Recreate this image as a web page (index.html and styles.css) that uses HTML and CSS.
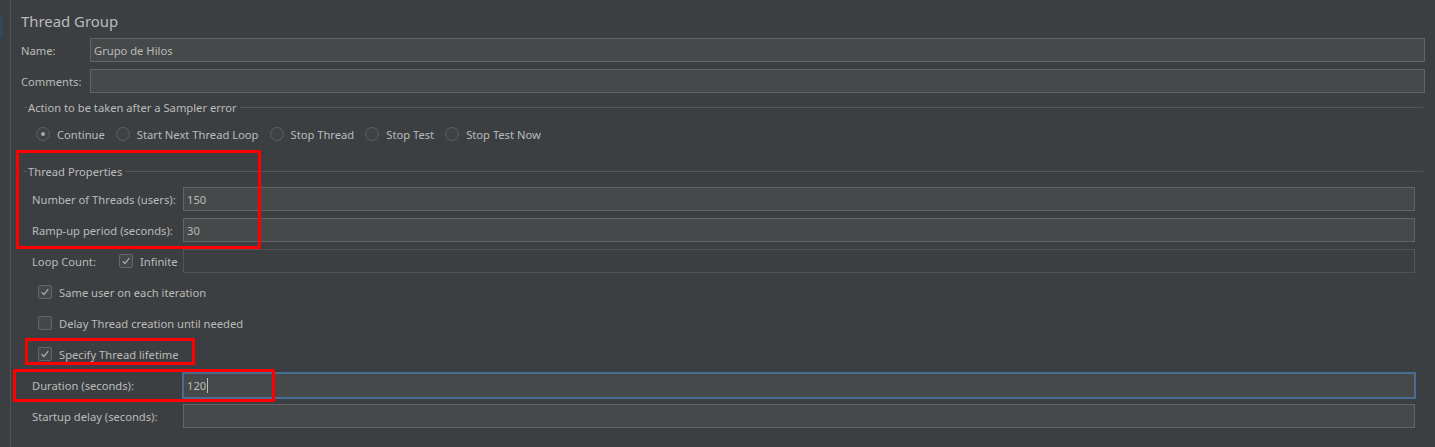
FILE: index.html
```html
<!DOCTYPE html>
<html>
<head>
<meta charset="utf-8">
<link rel="stylesheet" href="styles.css">
</head>
<body>
<div class="app">
  <div class="sidebar"><div class="sel"></div></div>
  <div class="main">
    <div class="title">Thread Group</div>
    <div class="row top-row first">
      <span class="lbl name-lbl">Name:</span>
      <div class="field">Grupo de Hilos</div>
    </div>
    <div class="row top-row">
      <span class="lbl name-lbl">Comments:</span>
      <div class="field"></div>
    </div>

    <div class="legend l1"><span class="pre"></span><span class="ltext">Action to be taken after a Sampler error</span><span class="line"></span></div>
    <div class="radios">
      <label class="opt"><span class="radio on"></span>Continue</label>
      <label class="opt"><span class="radio"></span>Start Next Thread Loop</label>
      <label class="opt"><span class="radio"></span>Stop Thread</label>
      <label class="opt"><span class="radio"></span>Stop Test</label>
      <label class="opt"><span class="radio"></span>Stop Test Now</label>
    </div>

    <div class="legend l2"><span class="pre"></span><span class="ltext">Thread Properties</span><span class="line"></span></div>
    <div class="props">
      <div class="row prow first">
        <span class="lbl plbl">Number of Threads (users):</span>
        <div class="field">150</div>
      </div>
      <div class="row prow">
        <span class="lbl plbl">Ramp-up period (seconds):</span>
        <div class="field">30</div>
      </div>
      <div class="row prow">
        <span class="lbl loop-lbl">Loop Count:</span>
        <span class="loop-check"><span class="cb on"><svg viewBox="0 0 14 14"><path d="M3.2 7.4 L5.8 10 L10.8 3.6" /></svg></span>Infinite</span>
        <div class="field disabled"></div>
      </div>
      <div class="crow"><span class="cb on"><svg viewBox="0 0 14 14"><path d="M3.2 7.4 L5.8 10 L10.8 3.6" /></svg></span>Same user on each iteration</div>
      <div class="crow"><span class="cb"></span>Delay Thread creation until needed</div>
      <div class="crow"><span class="cb on"><svg viewBox="0 0 14 14"><path d="M3.2 7.4 L5.8 10 L10.8 3.6" /></svg></span>Specify Thread lifetime</div>
      <div class="row prow">
        <span class="lbl plbl">Duration (seconds):</span>
        <div class="field focus">120<span class="caret"></span></div>
      </div>
      <div class="row prow">
        <span class="lbl plbl">Startup delay (seconds):</span>
        <div class="field"></div>
      </div>
    </div>
  </div>
</div>
<div class="hl hl1"></div>
<div class="hl hl2"></div>
<div class="hl hl3"></div>
</body>
</html>
```

FILE: styles.css
```css
html, body {
  margin: 0;
  padding: 0;
  background: #3c3f41;
}
body {
  width: 1435px;
  height: 447px;
  overflow: hidden;
  position: relative;
  font-family: "Noto Sans", "Open Sans", sans-serif;
  font-size: 11.2px;
  color: #bbbbbb;
  white-space: nowrap;
}
.app {
  display: flex;
  height: 447px;
}
.sidebar {
  width: 10px;
  flex: none;
  border-right: 1px solid #515456;
  background: #3c3f41;
  position: relative;
}
.sel {
  margin-top: 17px;
  width: 2px;
  height: 20px;
  background: #2f4a63;
}
.main {
  flex: 1;
  padding: 8px 10px 0 10px;
  display: flex;
  flex-direction: column;
}
.title {
  height: 26px;
  line-height: 26px;
  font-size: 14.9px;
  color: #bbbbbb;
}
.row {
  display: flex;
  align-items: center;
  height: 24px;
}
.lbl { padding-top: 1px; }
.top-row { margin-top: 7px; }
.top-row.first { margin-top: 4px; }
.name-lbl { width: 69px; flex: none; }
.field {
  flex: 1;
  height: 24px;
  box-sizing: border-box;
  border: 1px solid #646464;
  background: #45494a;
  padding: 1px 0 0 3px;
  color: #bbbbbb;
  display: flex;
  align-items: center;
}
.field.disabled {
  background: #3c3f41;
  border-color: #525456;
}
.field.focus {
  border: 1px solid #4a6d94;
  box-shadow: 0 0 0 1px #466d94;
  height: 25px;
}
.caret {
  display: inline-block;
  width: 1px;
  height: 15px;
  background: #bbbbbb;
  margin-left: 1px;
}
.legend {
  display: flex;
  align-items: center;
  height: 16px;
  padding-left: 2px;
  padding-right: 2px;
}
.legend .pre {
  width: 4px;
  height: 1px;
  background: #535658;
  flex: none;
}
.legend .ltext {
  padding: 1px 3px 0 1px;
}
.legend .line {
  flex: 1;
  height: 1px;
  background: #535658;
}
.l1 { margin-top: 6px; }
.l2 { margin-top: 17px; }
.radios {
  margin-top: 7px;
  height: 24px;
  display: flex;
  align-items: center;
  padding-left: 15px;
}
.opt {
  display: flex;
  align-items: center;
  margin-right: 11px;
  padding-top: 1px;
}
.radio {
  width: 14px;
  height: 14px;
  box-sizing: border-box;
  border-radius: 50%;
  border: 1px solid #5e6062;
  background: #3f4345;
  margin-right: 7px;
  margin-top: -1px;
  display: flex;
  align-items: center;
  justify-content: center;
}
.radio.on::after {
  content: "";
  width: 4px;
  height: 4px;
  border-radius: 50%;
  background: #a8a8a8;
}
.props {
  padding-left: 11px;
  padding-right: 0;
  display: flex;
  flex-direction: column;
}
.prow { margin-top: 7px; padding-right: 10px; }
.prow.first { margin-top: 8px; }
.plbl { width: 151px; flex: none; }
.loop-lbl { width: 87px; flex: none; }
.loop-check {
  display: flex;
  align-items: center;
  width: 64px;
  flex: none;
  padding-top: 1px;
}
.cb {
  width: 14px;
  height: 14px;
  box-sizing: border-box;
  border: 1px solid #646667;
  border-radius: 2px;
  background: #43494a;
  margin-right: 7px;
  margin-top: -1px;
  flex: none;
  display: flex;
}
.cb svg {
  width: 12px;
  height: 12px;
}
.cb path {
  fill: none;
  stroke: #a9a9a9;
  stroke-width: 1.6;
}
.crow {
  display: flex;
  align-items: center;
  height: 24px;
  margin-top: 7px;
  padding-left: 6px;
  padding-top: 1px;
  box-sizing: border-box;
}
.hl {
  position: absolute;
  border: 3px solid #ff0000;
  box-sizing: border-box;
}
.hl1 { left: 16px; top: 150px; width: 245px; height: 99px; }
.hl2 { left: 25px; top: 338px; width: 170px; height: 27px; }
.hl3 { left: 13px; top: 369px; width: 262px; height: 33px; }
```
